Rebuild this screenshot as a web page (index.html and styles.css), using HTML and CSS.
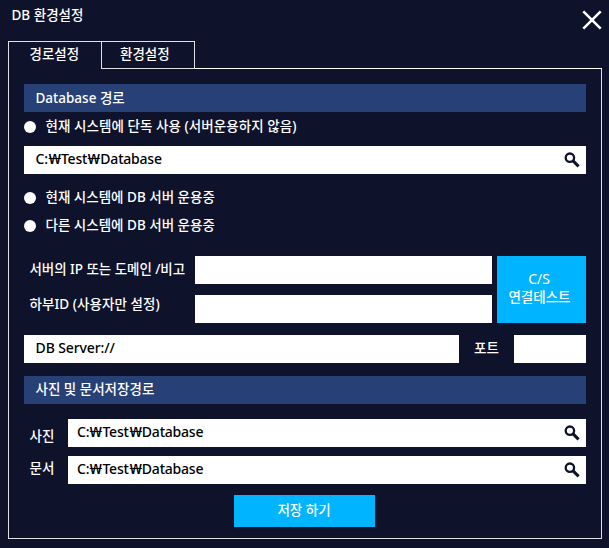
FILE: index.html
```html
<!DOCTYPE html>
<html lang="ko">
<head>
<meta charset="utf-8">
<title>DB 환경설정</title>
<link rel="stylesheet" href="styles.css">
</head>
<body>
<svg class="defs" width="0" height="0"><symbol id="search" viewBox="0 0 16 16"><circle cx="5.9" cy="5.7" r="4.2" fill="none" stroke="#0e122b" stroke-width="2.3"/><path d="M8.8 8.6 14.6 14.4" stroke="#0e122b" stroke-width="3"/></symbol></svg>
<div class="window">
  <header class="titlebar">
    <h1 class="title">DB 환경설정</h1>
    <svg class="close" viewBox="0 0 20 20"><path d="M1.3 1.3 18.7 18.7M18.7 1.3 1.3 18.7" stroke="#fff" stroke-width="2.6"/></svg>
  </header>
  <nav class="tabs">
    <div class="tab active">경로설정</div>
    <div class="tab">환경설정</div>
    <div class="tab-line"></div>
  </nav>
  <main class="panel">
    <h2 class="bar"><span>Database 경로</span></h2>
    <div class="radio first"><i class="dot"></i><span class="alone">현재 시스템에 단독 사용 (서버운용하지 않음)</span></div>
    <div class="field path"><span class="value">C:<b class="won">₩</b>Test<b class="won">₩</b>Database</span><svg class="icon"><use href="#search"/></svg></div>
    <div class="radio second"><i class="dot"></i><span>현재 시스템에 DB 서버 운용중</span></div>
    <div class="radio third"><i class="dot"></i><span>다른 시스템에 DB 서버 운용중</span></div>
    <section class="server">
      <div class="rows">
        <div class="row"><label>서버의 IP 또는 도메인 /비고</label><div class="field"></div></div>
        <div class="row"><label class="sub">하부ID (사용자만 설정)</label><div class="field"></div></div>
      </div>
      <div class="button test"><span class="cs">C/S</span><span>연결테스트</span></div>
    </section>
    <div class="address">
      <div class="field uri"><span class="db">DB Server://</span></div>
      <label>포트</label>
      <div class="field port"></div>
    </div>
    <h2 class="bar storage"><span>사진 및 문서저장경로</span></h2>
    <div class="store photo"><label>사진</label><div class="field"><span class="value">C:<b class="won">₩</b>Test<b class="won">₩</b>Database</span><svg class="icon"><use href="#search"/></svg></div></div>
    <div class="store doc"><label>문서</label><div class="field"><span class="value">C:<b class="won">₩</b>Test<b class="won">₩</b>Database</span><svg class="icon"><use href="#search"/></svg></div></div>
    <div class="button save">저장 하기</div>
  </main>
</div>
</body>
</html>
```
FILE: styles.css
```css
* { box-sizing: border-box; }
body {
  margin: 0;
  background: #0e122b;
  color: #fff;
  font: 500 13.5px/20px "Noto Sans", "Noto Sans CJK KR", sans-serif;
  white-space: nowrap;
}
.defs { display: block; }
.window { width: 609px; height: 548px; padding: 0 7px 0 8px; overflow: hidden; }
.titlebar { display: flex; justify-content: space-between; height: 41px; padding: 5px 0 0 3.5px; }
.title { margin: 0; font: inherit; }
.close { width: 20px; height: 20px; margin-top: 5px; }
.tabs { display: flex; height: 28px; }
.tab { width: 94px; height: 28px; border: solid #dfe0e5; border-width: 1px 1px 1px 0; padding: 2px 0 0 18px; }
.tab.active { border-width: 1px 1px 0 1px; padding-left: 20.5px; }
.tab:not(.active) { width: 93px; }
.tab-line { flex: 1; border-bottom: 1px solid #fff; }
.panel { height: 470px; border: solid #dfe0e5; border-width: 0 1px 1px; padding: 15px 15px 0; }
.bar { margin: 0; height: 28px; padding: 4px 11.5px; background: #274176; font: inherit; }
.radio { display: flex; align-items: center; height: 20px; }
.radio span { margin-top: -2px; }
.alone { letter-spacing: .06px; }
.dot { width: 12px; height: 12px; margin: 0 9.5px 0 0; border-radius: 50%; background: #fff; }
.radio.first { margin-top: 5px; }
.field { display: flex; justify-content: space-between; height: 28px; padding: 3px 6px 0 11.5px; background: #fff; color: #000; }
.path { margin-top: 9px; }
.value { font-size: 14px; letter-spacing: -.22px; }
.won { display: inline-block; width: 13.2px; font-weight: 500; text-align: center; transform: scaleX(1.3); }
.db { font-size: 14px; letter-spacing: -.1px; }
.icon { width: 16px; height: 16px; margin-top: 3px; }
.radio.second { margin-top: 14px; }
.radio.third { margin-top: 8px; }
.server { display: flex; gap: 5px; margin-top: 20px; }
.rows { display: grid; gap: 11px; width: 468px; }
.row { display: flex; }
.row label { width: 171px; padding: 3px 0 0 5.5px; letter-spacing: -.05px; }
.row .sub { margin-top: -1px; padding-top: 0; letter-spacing: .05px; }
.row .field { flex: 1; }
.button { background: #00b4ff; text-align: center; }
.test { display: flex; flex-direction: column; width: 89px; height: 67px; padding: 14px 4px 0 0; line-height: 18px; }
.cs { font-size: 14px; font-weight: 400; padding-right: 1px; }
.address { display: flex; margin-top: 12px; }
.uri { width: 435px; }
.address label { width: 55px; padding: 3px 0 0 15px; }
.port { width: 72px; }
.storage { margin-top: 13px; padding-top: 3px; }
.store { display: flex; margin-top: 9px; }
.photo { margin-top: 15px; }
.store label { width: 44px; padding: 7px 0 0 5.5px; }
.doc label { padding-top: 2px; }
.store .field { flex: 1; padding-left: 9px; }
.save { width: 141px; height: 32px; margin: 11px 0 0 210px; padding: 5px 1px 0 0; }
```
